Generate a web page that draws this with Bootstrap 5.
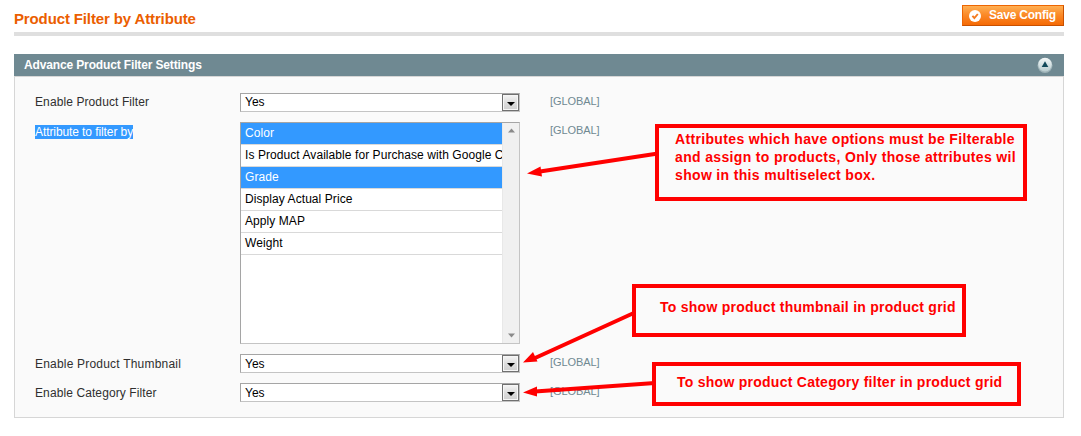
<!DOCTYPE html>
<html lang="en">
<head>
<meta charset="utf-8">
<meta name="viewport" content="width=device-width, initial-scale=1">
<title>Product Filter by Attribute</title>
<link href="https://cdn.jsdelivr.net/npm/bootstrap@5.3.0/dist/css/bootstrap.min.css" rel="stylesheet">
<style>
body{font:12px/14px "Liberation Sans",Arial,sans-serif;color:#2f2f2f;background:#fff;overflow:hidden}
.page-wrap{width:1050px;margin-left:14px;padding-top:5px}
.page-head{height:31px;border-bottom:4px solid #dfdfdf}
.page-title{font-size:15px;line-height:18px;font-weight:700;color:#eb5e00;letter-spacing:-.13px;margin-top:5px}
.btn-save{height:21px;width:102px;padding:0 0 0 6px;border:1px solid;border-color:#ed6502 #c85000 #c85000 #ed6502;border-radius:0;background:linear-gradient(#ffb054,#fb8a28 45%,#f56a05);color:#fff;font:bold 12px/18px "Liberation Sans",Arial,sans-serif;letter-spacing:-.22px}
.btn-save:hover{color:#fff}
.btn-save span{margin-left:8px;margin-top:-1px}
.panel-head{margin-top:18px;height:22px;padding:0 11px 0 10px;background:#6f8992;color:#fff;font-weight:700;letter-spacing:-.14px}
.panel-body{height:342px;border:1px solid #d6d6d6;background:#fafafa;padding:16px 20px 0;position:relative}
.field{display:grid;grid-template-columns:205px 280px 1fr;align-items:start}
.field-label{padding-top:2px;letter-spacing:.1px}
.lowered .field-label{padding-top:3px}
.picked{background:#39f;color:#fff;height:14px}
.scope{font-size:11px;color:#6f8992;padding:1px 0 0 30px;letter-spacing:-.08px}
.pick{height:19px;border:1px solid #a5a5a5;border-bottom-color:#c4c4c4;border-right-color:#c4c4c4;background:#fff;color:#000;padding-left:4px;line-height:17px}
.lowered .pick{line-height:19px}
.pick-btn{width:17px;height:17px;border:1px solid #707070;background:linear-gradient(#f5f5f5,#ddd 50%,#cfcfcf);box-shadow:inset 0 0 0 1px #f6f6f6}
.multi{height:222px;border:1px solid #a5a5a5;border-bottom-color:#c4c4c4;border-right-color:#c4c4c4;background:#fff;color:#000}
.multi-list{width:261px;overflow:hidden;white-space:nowrap}
.multi-list div{height:22px;border-bottom:1px solid #d9d9d9;padding-left:4px;line-height:20px;letter-spacing:.07px}
.multi-list .on{background:#39f;background-clip:padding-box;color:#fff}
.multi-bar{width:17px;background:#f0f0f0;border-left:1px solid #e8e8e8;padding:5px 0}
.arrows{position:absolute;left:0;top:0;pointer-events:none}
.callout{position:absolute;border:4px solid #f00;background:#fafafa;color:#f00;font-weight:700;font-size:14px;line-height:18px;letter-spacing:.34px;white-space:nowrap}
</style>
</head>
<body>
<main class="page-wrap">
  <header class="page-head d-flex justify-content-between align-items-start">
    <h1 class="page-title mb-0">Product Filter by Attribute</h1>
    <button class="btn btn-save d-flex align-items-center" type="button">
      <svg width="12" height="12" viewBox="0 0 12 12"><circle cx="6" cy="6" r="6" fill="#fff"/><path d="M3.4 5.8 5.4 8 8.8 4" fill="none" stroke="#f47b20" stroke-width="1.9"/></svg>
      <span>Save Config</span>
    </button>
  </header>
  <section>
    <div class="panel-head d-flex justify-content-between align-items-center">
      <span>Advance Product Filter Settings</span>
      <svg width="16" height="16" viewBox="0 0 16 16"><defs><linearGradient id="knob" x2="0" y2="1"><stop stop-color="#f4f8f8"/><stop offset="1" stop-color="#b9cdd0"/></linearGradient></defs><circle cx="8" cy="8.400" r="7.500" fill="#9fb3b8"/><circle cx="8" cy="7.600" r="6.800" fill="url(#knob)"/><path d="M8 4.300 11.300 10H4.700z" fill="#12495a"/></svg>
    </div>
    <div class="panel-body">
      <div class="field" style="height:29px">
        <div class="field-label">Enable Product Filter</div>
        <div class="pick d-flex justify-content-between"><span>Yes</span><span class="pick-btn d-flex"><svg width="15" height="15"><path d="M4 7h8L8 11z" fill="#000"/></svg></span></div>
        <div class="scope">[GLOBAL]</div>
      </div>
      <div class="field" style="height:232px">
        <div class="field-label" style="padding-top:3px"><span class="picked d-inline-block" style="letter-spacing:-.09px">Attribute to filter by</span></div>
        <div class="multi d-flex justify-content-between">
          <div class="multi-list">
            <div class="on">Color</div>
            <div>Is Product Available for Purchase with Google C</div>
            <div class="on">Grade</div>
            <div>Display Actual Price</div>
            <div>Apply MAP</div>
            <div>Weight</div>
          </div>
          <div class="multi-bar d-flex flex-column justify-content-between align-items-center">
            <svg width="7" height="5"><path d="M0 4.500 3.500.5 7 4.500z" fill="#8a8a8a"/></svg>
            <svg width="7" height="5"><path d="M0 .5 3.500 4.500 7 .5z" fill="#8a8a8a"/></svg>
          </div>
        </div>
        <div class="scope">[GLOBAL]</div>
      </div>
      <div class="field lowered" style="height:29px">
        <div class="field-label" style="letter-spacing:.2px">Enable Product Thumbnail</div>
        <div class="pick d-flex justify-content-between"><span>Yes</span><span class="pick-btn d-flex"><svg width="15" height="15"><path d="M4 7h8L8 11z" fill="#000"/></svg></span></div>
        <div class="scope">[GLOBAL]</div>
      </div>
      <div class="field lowered">
        <div class="field-label">Enable Category Filter</div>
        <div class="pick d-flex justify-content-between"><span>Yes</span><span class="pick-btn d-flex"><svg width="15" height="15"><path d="M4 7h8L8 11z" fill="#000"/></svg></span></div>
        <div class="scope">[GLOBAL]</div>
      </div>
    </div>
  </section>
</main>
<svg class="arrows" width="1081" height="436" fill="#f00" stroke="#f00">
  <path d="M658 153.500 540 171.500M636 312 534 358.500M655 383 535 391.500" stroke-width="4"/>
  <path d="M527 173.500 540.500 166.500 542 176.500zM523 362.500 533 352 537.500 361.500zM523 392.500 537 386.500V396.500z" stroke="none"/>
</svg>
<div class="callout" style="left:655px;top:124px;width:372px;height:77px;padding:2px 0 0 16px">Attributes which have options must be Filterable<br>and assign to products, Only those attributes wil<br>show in this multiselect box.</div>
<div class="callout" style="left:632px;top:284px;width:334px;height:53px;padding:10px 0 0 24px;letter-spacing:.26px">To show product thumbnail in product grid</div>
<div class="callout" style="left:652px;top:362px;width:369px;height:44px;padding:7px 0 0 21px;letter-spacing:.26px">To show product Category filter in product grid</div>
<script src="https://cdn.jsdelivr.net/npm/bootstrap@5.3.0/dist/js/bootstrap.bundle.min.js"></script>
</body>
</html>
